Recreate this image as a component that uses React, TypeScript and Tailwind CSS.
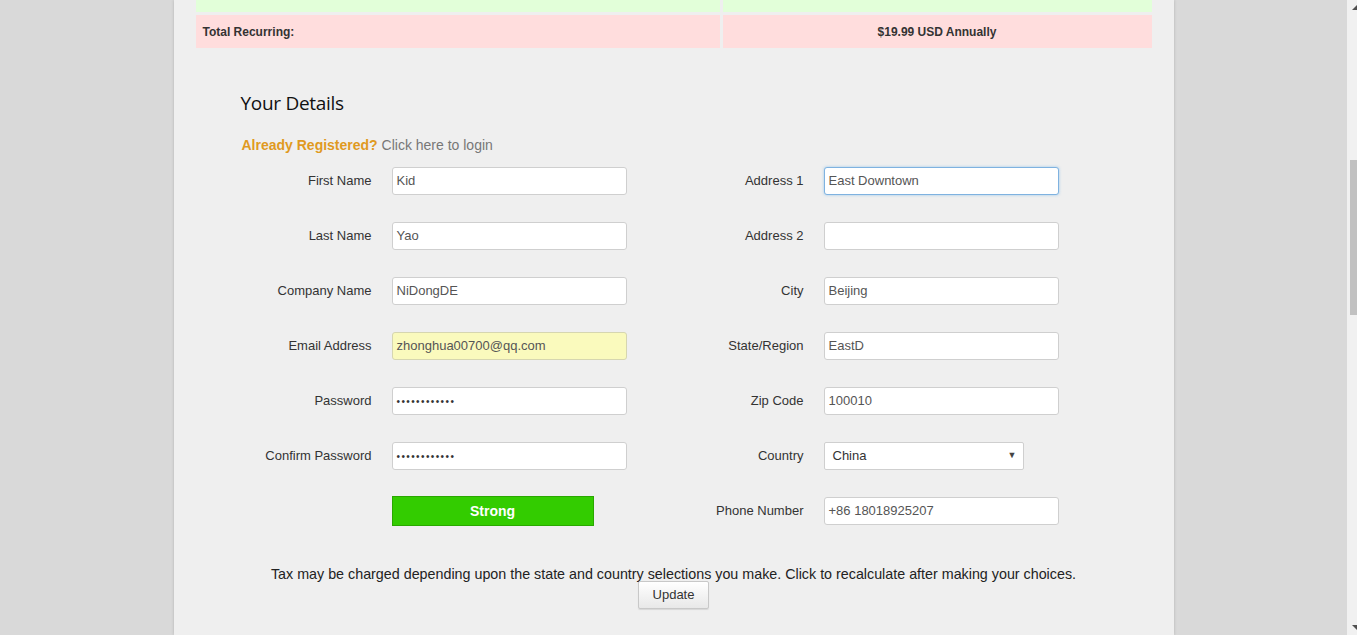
import React from "react"

const leftRows = [
  { label: "First Name", value: "Kid" },
  { label: "Last Name", value: "Yao" },
  { label: "Company Name", value: "NiDongDE" },
  { label: "Email Address", value: "zhonghua00700@qq.com", autofill: true },
  { label: "Password", value: "••••••••••••", password: true },
  { label: "Confirm Password", value: "••••••••••••", password: true },
]

const rightRows = [
  { label: "Address 1", value: "East Downtown", focused: true },
  { label: "Address 2", value: "" },
  { label: "City", value: "Beijing" },
  { label: "State/Region", value: "EastD" },
  { label: "Zip Code", value: "100010" },
]

function Field({
  value,
  autofill,
  focused,
  password,
}: {
  value: string
  autofill?: boolean
  focused?: boolean
  password?: boolean
}) {
  return (
    <div
      className={
        "flex h-[28px] w-[235px] items-center rounded-[3px] border px-[4px] text-[13px] text-[#555] " +
        (focused
          ? "border-[#7fb2e0] bg-white shadow-[0_0_3px_rgba(102,175,233,0.6)]"
          : autofill
            ? "border-[#d6d6b0] bg-[#fafabd] text-[#222]"
            : "border-[#cfcfcf] bg-white")
      }
    >
      <span className={password ? "text-[10px] tracking-[1.4px] text-[#333]" : ""}>{value}</span>
    </div>
  )
}

function Row({ label, children }: { label: string; children: React.ReactNode }) {
  return (
    <div className="flex h-[28px] items-center gap-[20px]">
      <div className="w-[131px] text-right text-[13px] text-[#333]">{label}</div>
      {children}
    </div>
  )
}

export default function App() {
  return (
    <div
      className="flex h-[635px] overflow-hidden bg-[#d9d9d9]"
      style={{ fontFamily: '"Liberation Sans", Arial, sans-serif' }}
    >
      <div className="flex-1">
        <div className="mx-auto h-[635px] w-[1000px] bg-[#efefef] shadow-[0_0_3px_rgba(0,0,0,0.18)]">
          {/* Order summary table */}
          <div className="px-[22px]">
            <div className="flex gap-[3px]">
              <div className="h-[12px] w-[524px] bg-[#e2ffd9]" />
              <div className="h-[12px] flex-1 bg-[#e2ffd9]" />
            </div>
            <div className="mt-[3px] flex gap-[3px] text-[12px] font-bold text-[#333]">
              <div className="flex h-[33px] w-[524px] items-center bg-[#ffdddd] px-[7px]">Total Recurring:</div>
              <div className="flex h-[33px] flex-1 items-center justify-center bg-[#ffdddd]">$19.99 USD Annually</div>
            </div>
          </div>

          {/* Your Details */}
          <div className="pl-[67px] pt-[43px]">
            <h2
              className="text-[19px] leading-[24px] text-[#111]"
              style={{ fontFamily: '"Open Sans", sans-serif', letterSpacing: "-0.3px" }}
            >
              Your Details
            </h2>
            <div className="ml-[1px] mt-[20px] text-[14px] leading-[20px]">
              <span className="font-bold text-[#e09a1f]">Already Registered?</span>{" "}
              <span className="text-[#777]">Click here to login</span>
            </div>

            <div className="mt-[12px] flex">
              <div className="flex w-[432px] flex-col gap-[27px]">
                {leftRows.map((r) => (
                  <Row key={r.label} label={r.label}>
                    <Field value={r.value} autofill={r.autofill} password={r.password} />
                  </Row>
                ))}
                <div className="flex h-[28px] items-center gap-[20px]">
                  <div className="w-[131px]" />
                  <div className="flex h-[30px] w-[202px] items-center justify-center border border-[#2aa800] bg-[#33cc00] text-[14px] font-bold text-white">
                    Strong
                  </div>
                </div>
              </div>
              <div className="flex flex-col gap-[27px]">
                {rightRows.map((r) => (
                  <Row key={r.label} label={r.label}>
                    <Field value={r.value} focused={r.focused} />
                  </Row>
                ))}
                <Row label="Country">
                  <div className="flex h-[28px] w-[200px] items-center justify-between rounded-[2px] border border-[#cfcfcf] bg-white pl-[8px] pr-[6px] text-[13px] text-[#333]">
                    <span>China</span>
                    <span className="text-[9px] text-[#444]">▼</span>
                  </div>
                </Row>
                <Row label="Phone Number">
                  <Field value="+86 18018925207" />
                </Row>
              </div>
            </div>
          </div>

          <div className="mt-[39px] text-center text-[14.3px] leading-[20px] text-[#222]">
            Tax may be charged depending upon the state and country selections you make. Click to recalculate after making your choices.
          </div>
          <div className="mt-[-3px] flex justify-center">
            <button className="h-[28px] w-[71px] rounded-[2px] border border-[#c8c8c8] bg-gradient-to-b from-white to-[#e8e8e8] text-[13px] text-[#333] shadow-[0_1px_1px_rgba(0,0,0,0.1)]">
              Update
            </button>
          </div>
        </div>
      </div>

      {/* Scrollbar */}
      <div className="flex w-[10px] flex-col bg-[#f1f1f1]">
        <div className="flex h-[10px] items-end justify-end">
          <div className="h-0 w-0 border-b-[5px] border-l-[5px] border-b-[#505050] border-l-transparent" />
        </div>
        <div className="h-[150px]" />
        <div className="ml-[3px] h-[155px] bg-[#c1c1c1]" />
        <div className="flex-1" />
        <div className="flex h-[10px] items-start justify-end">
          <div className="h-0 w-0 border-t-[5px] border-l-[5px] border-t-[#505050] border-l-transparent" />
        </div>
      </div>
    </div>
  )
}
